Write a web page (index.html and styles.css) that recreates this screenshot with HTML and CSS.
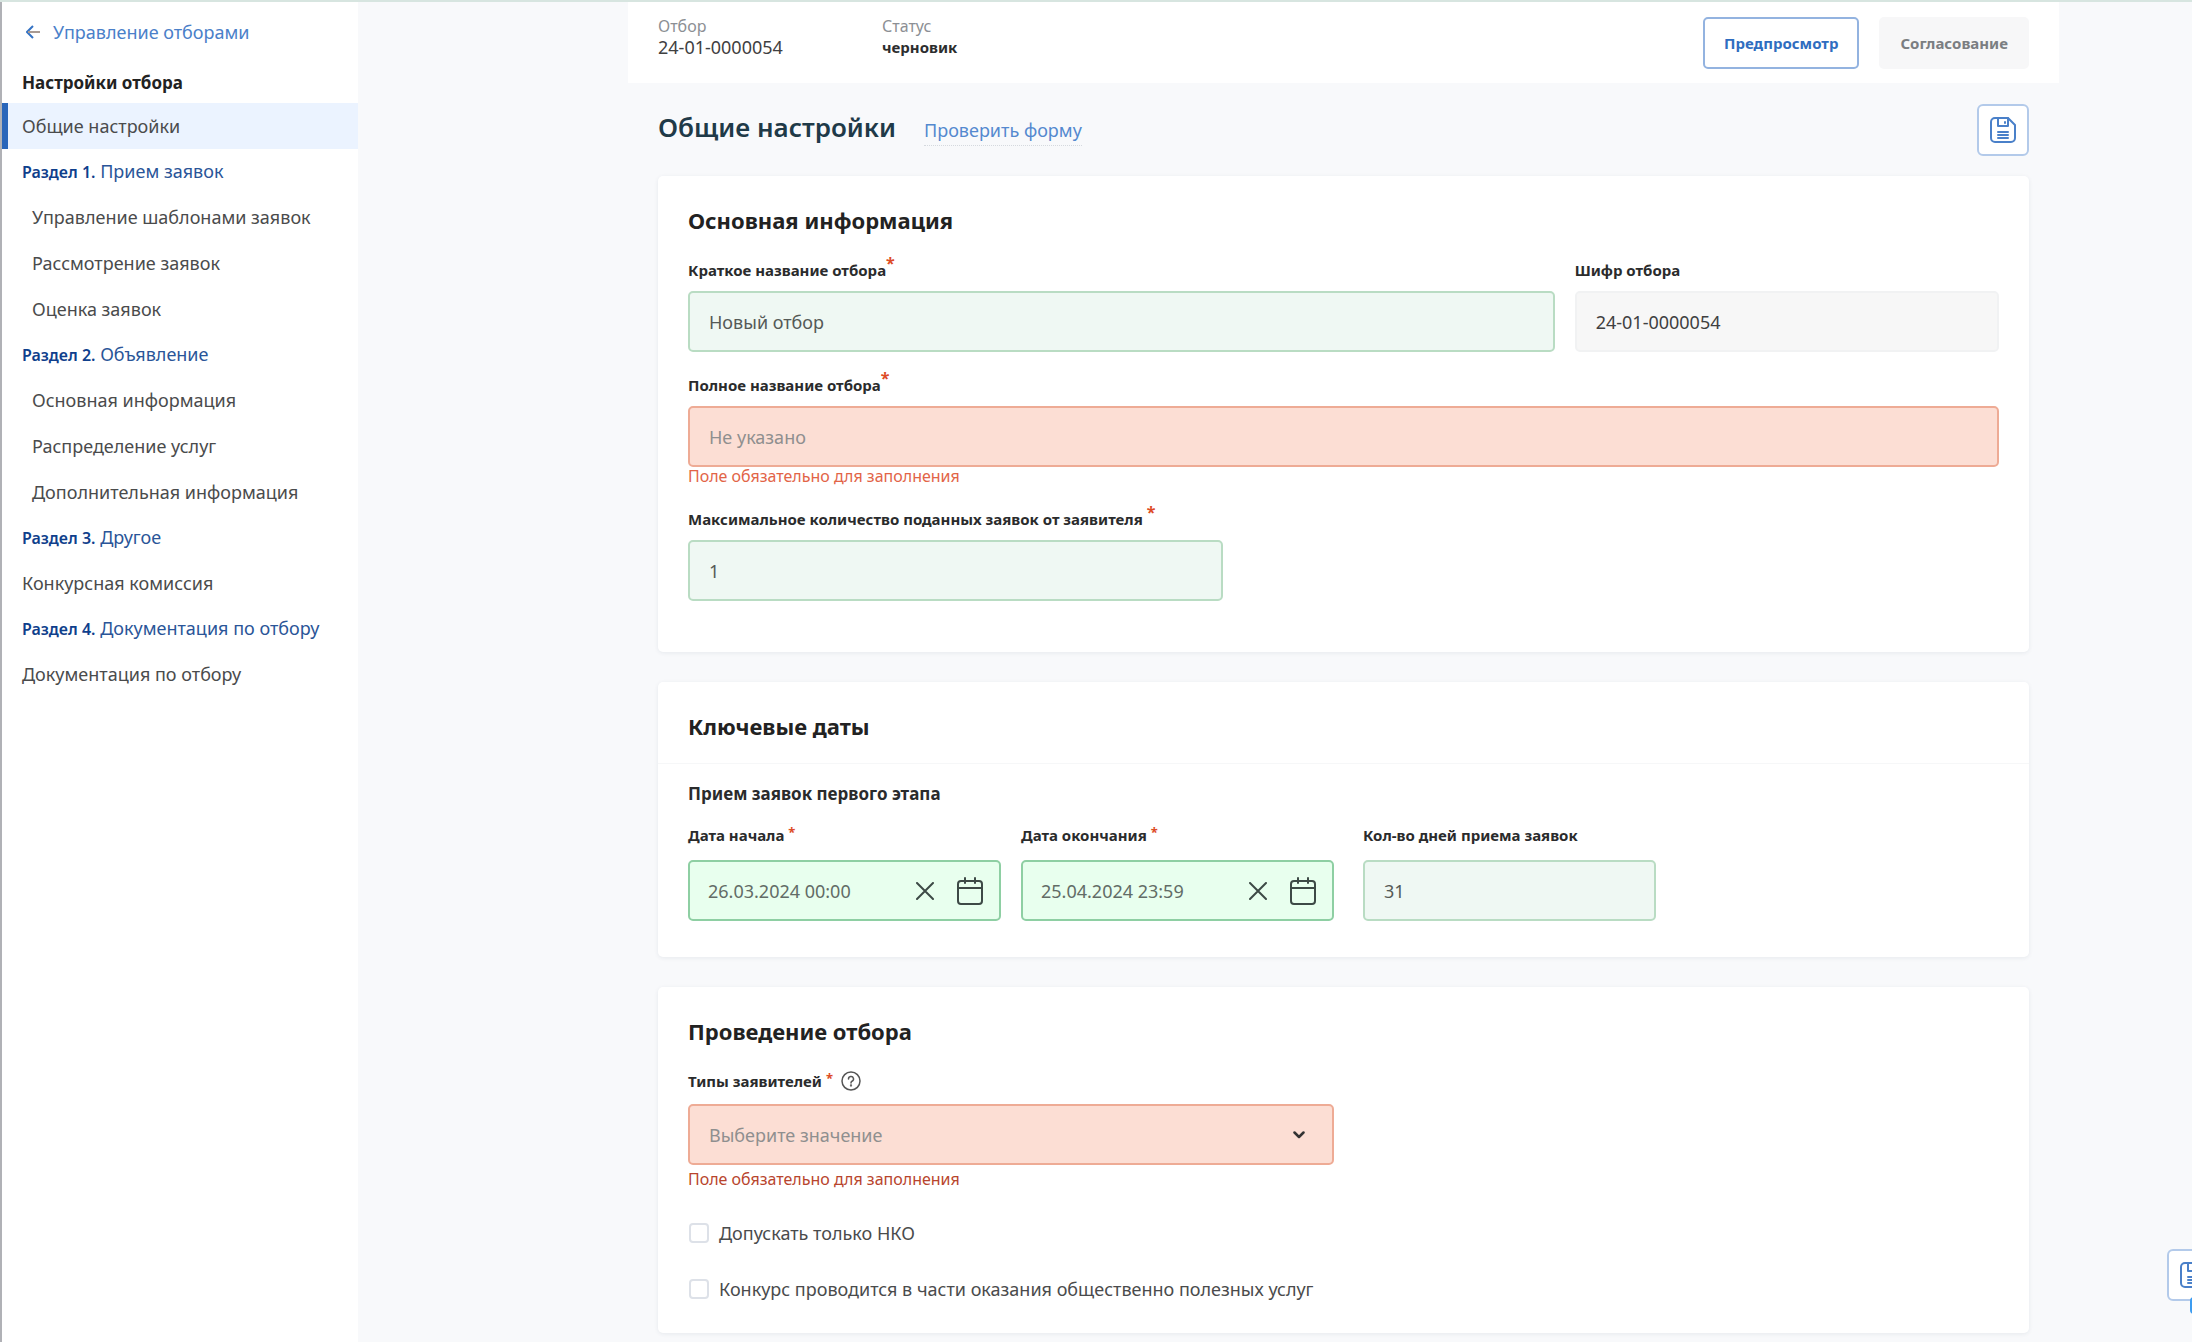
FILE: index.html
```
<!DOCTYPE html>
<html lang="ru">
<head>
<meta charset="utf-8">
<title>Общие настройки</title>
<link rel="stylesheet" href="styles.css">
</head>
<body>
<svg class="sprite" aria-hidden="true">
  <symbol id="i-save" viewBox="0 0 26 26" fill="none" stroke="currentColor" stroke-width="2" stroke-linejoin="round" stroke-linecap="round">
    <path d="M5 1H18L25 8V21A4 4 0 0 1 21 25H5A4 4 0 0 1 1 21V5A4 4 0 0 1 5 1Z"/>
    <path d="M8 1V9H18V1M15 5V6"/>
    <path d="M8 15H18M8 18H18M8 21H18"/>
  </symbol>
  <symbol id="i-calendar" viewBox="0 0 26 28" fill="none" stroke="currentColor" stroke-width="2" stroke-linecap="round">
    <rect x="1" y="4" width="24" height="23" rx="3"/>
    <path d="M1 11H25M8 1V6M18 1V6"/>
  </symbol>
  <symbol id="i-cross" viewBox="0 0 18 18" fill="none" stroke="currentColor" stroke-width="2" stroke-linecap="round">
    <path d="M1 1L17 17M17 1L1 17"/>
  </symbol>
</svg>
<div class="app">
  <nav class="sidebar" aria-label="Настройки отбора">
    <a class="back" href="#">
      <svg width="14" height="14" viewBox="0 0 14 14" fill="none" stroke="currentColor" stroke-width="2"><path d="M7 1L1 7L7 13"/><path class="shaft" d="M2 7H14"/></svg>
      Управление отборами
    </a>
    <h2 class="menu-title">Настройки отбора</h2>
    <ul class="menu">
      <li><a class="item active" href="#">Общие настройки</a></li>
      <li><a class="section" href="#"><b>Раздел 1.</b> Прием заявок</a></li>
      <li><a class="item sub" href="#">Управление шаблонами заявок</a></li>
      <li><a class="item sub" href="#">Рассмотрение заявок</a></li>
      <li><a class="item sub" href="#">Оценка заявок</a></li>
      <li><a class="section" href="#"><b>Раздел 2.</b> Объявление</a></li>
      <li><a class="item sub" href="#">Основная информация</a></li>
      <li><a class="item sub" href="#">Распределение услуг</a></li>
      <li><a class="item sub" href="#">Дополнительная информация</a></li>
      <li><a class="section" href="#"><b>Раздел 3.</b> Другое</a></li>
      <li><a class="item" href="#">Конкурсная комиссия</a></li>
      <li><a class="section" href="#"><b>Раздел 4.</b> Документация по отбору</a></li>
      <li><a class="item" href="#">Документация по отбору</a></li>
    </ul>
  </nav>

  <main class="main">
    <header class="topbar">
      <dl class="facts">
        <div><dt>Отбор</dt><dd>24-01-0000054</dd></div>
        <div><dt>Статус</dt><dd class="status">черновик</dd></div>
      </dl>
      <div class="actions">
        <button class="btn btn-outline" type="button">Предпросмотр</button>
        <button class="btn btn-muted" type="button">Согласование</button>
      </div>
    </header>

    <form class="content">
      <div class="page-head">
        <div class="heading">
          <h1>Общие настройки</h1>
          <a class="check" href="#">Проверить форму</a>
        </div>
        <button class="save" type="button" aria-label="Сохранить"><svg width="26" height="26"><use href="#i-save"/></svg></button>
      </div>

      <section class="card card-main">
        <h2>Основная информация</h2>
        <div class="rows">
          <div class="pair">
            <div class="field">
              <label for="short">Краткое название отбора<span class="req">*</span></label>
              <input id="short" class="control valid" type="text" value="Новый отбор">
            </div>
            <div class="field">
              <label for="code">Шифр отбора</label>
              <input id="code" class="control locked" type="text" value="24-01-0000054" readonly>
            </div>
          </div>
          <div class="field">
            <label for="full">Полное название отбора<span class="req">*</span></label>
            <input id="full" class="control invalid" type="text" placeholder="Не указано">
            <p class="error">Поле обязательно для заполнения</p>
          </div>
          <div class="field limit">
            <label for="max">Максимальное количество поданных заявок от заявителя <span class="req">*</span></label>
            <input id="max" class="control valid" type="text" value="1">
          </div>
        </div>
      </section>

      <section class="card card-dates">
        <h2>Ключевые даты</h2>
        <div class="card-body">
          <h3>Прием заявок первого этапа</h3>
          <div class="dates">
            <div class="field">
              <label for="start">Дата начала <span class="req small">*</span></label>
              <div class="control date">
                <input id="start" type="text" value="26.03.2024 00:00">
                <button type="button" aria-label="Очистить"><svg width="18" height="18"><use href="#i-cross"/></svg></button>
                <button type="button" aria-label="Календарь"><svg width="26" height="28"><use href="#i-calendar"/></svg></button>
              </div>
            </div>
            <div class="field">
              <label for="end">Дата окончания <span class="req small">*</span></label>
              <div class="control date">
                <input id="end" type="text" value="25.04.2024 23:59">
                <button type="button" aria-label="Очистить"><svg width="18" height="18"><use href="#i-cross"/></svg></button>
                <button type="button" aria-label="Календарь"><svg width="26" height="28"><use href="#i-calendar"/></svg></button>
              </div>
            </div>
            <div class="field days">
              <label for="days">Кол-во дней приема заявок</label>
              <input id="days" class="control valid" type="text" value="31" readonly>
            </div>
          </div>
        </div>
      </section>

      <section class="card card-run">
        <h2>Проведение отбора</h2>
        <div class="field types">
          <div class="label-row">
            <label for="types">Типы заявителей <span class="req small">*</span></label>
            <button class="help" type="button" aria-label="Подсказка"><svg width="20" height="20" viewBox="0 0 20 20" fill="none" stroke="currentColor" stroke-width="1.5" stroke-linecap="round"><circle cx="10" cy="10" r="9"/><path d="M7.5 8A2.5 2.5 0 1 1 11 10.200Q10 10.800 10 12"/><circle cx="10" cy="14.500" r=".4"/></svg></button>
          </div>
          <div class="select">
            <select id="types" class="control invalid"><option>Выберите значение</option></select>
            <svg class="chevron" width="12" height="8" viewBox="0 0 12 8" fill="none" stroke="currentColor" stroke-width="2.500" stroke-linecap="round" stroke-linejoin="round"><path d="M1.500 1.500L6 6L10.500 1.500"/></svg>
          </div>
          <p class="error dark">Поле обязательно для заполнения</p>
        </div>
        <div class="checks">
          <label class="check-row"><input type="checkbox">Допускать только НКО</label>
          <label class="check-row"><input type="checkbox">Конкурс проводится в части оказания общественно полезных услуг</label>
        </div>
      </section>
    </form>
  </main>
</div>
<button class="save floating" type="button" aria-label="Сохранить"><svg width="26" height="26"><use href="#i-save"/></svg></button>
<span class="edge-chip"></span>
</body>
</html>
```
FILE: styles.css
```
* { box-sizing: border-box; }

body {
  margin: 0;
  min-height: 100vh;
  overflow-x: hidden;
  border-top: 2px solid #d7e5e0;
  background: #f8f9fb;
  color: #3f4041;
  font: 18px/24px "Noto Sans", "Open Sans", sans-serif;
}

h1, h2, h3, p, ul, dl, dd { margin: 0; padding: 0; }
ul { list-style: none; }
a { text-decoration: none; }
button, input, select { font: inherit; color: inherit; margin: 0; }
button { cursor: pointer; }
.sprite { position: absolute; width: 0; height: 0; }

.app { display: flex; min-height: calc(100vh - 2px); }

/* Sidebar */
.sidebar {
  flex: 0 0 358px;
  border-left: 2px solid #b0b1b6;
  background: #fff;
}
.back {
  display: flex;
  align-items: center;
  gap: 13px;
  padding: 18px 24px 0;
  color: #4a80c9;
}
.back svg { flex: none; color: #3573c4; }
.back .shaft { stroke: #a99a92; }
.menu-title {
  padding: 27px 20px 8px;
  color: #222;
  font-size: 17px;
  line-height: 24px;
}
.menu a {
  display: block;
  padding: 0 20px;
  line-height: 46px;
  white-space: nowrap;
}
.menu .item { color: #4a4b4c; }
.menu .sub { padding-left: 30px; }
.menu .section { color: #2a5598; line-height: 45px; }
.menu b { color: #0f3f8c; font-size: 16px; font-weight: 600; line-height: 20px; }
.menu .active {
  padding-left: 14px;
  border-left: 6px solid #2a66ba;
  background: #ebf3ff;
}

/* Top bar */
.main { flex: 1; min-width: 0; padding: 0 133px 0 270px; }
.topbar {
  display: flex;
  justify-content: space-between;
  padding: 15px 30px 14px;
  background: #fff;
}
.facts { display: flex; }
.facts div { width: 224px; }
.facts dt { color: #8c8f94; font-size: 16px; line-height: 18px; }
.facts dd { line-height: 24px; }
.facts .status { color: #2c2d2e; font-size: 15px; font-weight: 700; }
.actions { display: flex; gap: 20px; }
.btn {
  height: 52px;
  padding: 0 19px;
  border: 2px solid;
  border-radius: 5px;
  font-size: 15px;
  font-weight: 700;
}
.btn-outline { border-color: #93b3e0; background: #fff; color: #2f6dc0; }
.btn-muted { border-color: #f7f7f8; background: #f7f7f8; color: #7b7e82; }

/* Page heading */
.content { padding: 21px 30px 11px; }
.page-head { display: flex; justify-content: space-between; }
.heading { display: flex; align-items: baseline; gap: 28px; padding-top: 5px; }
h1 { color: #1f3a48; font-size: 26px; font-weight: 600; line-height: 36px; }
.check { padding-bottom: 3px; border-bottom: 1px dotted #d5d9de; color: #5489cf; }
.save {
  display: grid;
  place-items: center;
  width: 52px;
  height: 52px;
  padding: 0;
  border: 2px solid #b3caea;
  border-radius: 6px;
  background: #fff;
  color: #4a80c9;
}

/* Cards */
.card {
  margin-top: 30px;
  padding: 29px 30px 32px;
  border-radius: 5px;
  background: #fff;
  box-shadow: 0 1px 4px rgba(30, 50, 80, .08);
}
.card h2 { color: #222; font-size: 22px; line-height: 30px; }
.card-main { margin-top: 20px; padding-bottom: 51px; }
.rows { display: grid; gap: 23px; margin-top: 25px; }
.pair { display: grid; grid-template-columns: 866fr 424fr; gap: 20px; }
.limit { width: 535px; }

.field { display: flex; flex-direction: column; }
.field label { color: #2a2b2c; font-size: 15px; font-weight: 700; line-height: 20px; white-space: nowrap; }
.req { color: #dd4b26; font-size: 16px; line-height: 0; vertical-align: 7px; }
.req.small { font-size: 13px; vertical-align: 4px; }
.control {
  width: 100%;
  height: 61px;
  margin-top: 11px;
  padding: 0 19px;
  border: 2px solid;
  border-radius: 5px;
  outline: 0;
}
.valid { border-color: #b9dcc3; background: #eff8f3; color: #555a57; }
.locked { border-color: #f1f2f3; background: #f7f7f7; }
.invalid { border-color: #eeab95; background: #fcded4; color: #8f8f8f; }
.invalid::placeholder { color: #8f8f8f; opacity: 1; }
.error { color: #e26447; font-size: 16px; line-height: 19px; }

/* Key dates */
.card-dates { padding: 0; }
.card-dates h2 { padding: 29px 30px 22px; border-bottom: 1px solid #f6f7f8; }
.card-body { padding: 20px 30px 36px; }
h3 { color: #2a2b2c; font-size: 17px; line-height: 20px; }
.dates { display: flex; gap: 20px; margin-top: 21px; }
.dates .field { width: 313px; }
.dates .days { width: 293px; margin-left: 9px; }
.dates .control { margin-top: 15px; }
.dates .date {
  display: flex;
  align-items: center;
  gap: 23px;
  padding: 0 16px 0 18px;
  border-color: #8ecfa3;
  background: #e8ffee;
}
.date input {
  flex: 1;
  min-width: 0;
  padding: 0;
  border: 0;
  outline: 0;
  background: none;
  color: #626c66;
}
.date button {
  display: grid;
  flex: none;
  padding: 0;
  border: 0;
  background: none;
  color: #3d4a46;
}

/* Selection procedure */
.types { width: 646px; margin-top: 25px; }
.label-row { display: flex; gap: 8px; height: 22px; }
.help { display: grid; align-self: flex-start; padding: 0; border: 0; background: none; color: #555; }
.select { position: relative; }
.select select { display: block; appearance: none; }
.chevron { position: absolute; right: 29px; bottom: 26px; color: #333; pointer-events: none; }
.error.dark { margin-top: 5px; color: #b8452d; }
.checks { display: grid; gap: 32px; margin-top: 32px; }
.check-row { display: flex; align-items: center; gap: 10px; color: #4a4b4c; }
.check-row input {
  flex: none;
  width: 20px;
  height: 20px;
  margin-left: 1px;
  appearance: none;
  border: 2px solid #dde1e8;
  border-radius: 4px;
  background: #fff;
}

/* Widgets docked to the window edge */
.floating { position: fixed; right: -27px; bottom: 41px; }
.edge-chip {
  position: fixed;
  right: -10px;
  bottom: 28px;
  width: 12px;
  height: 17px;
  border-radius: 4px;
  background: #3d9cf0;
}
```
